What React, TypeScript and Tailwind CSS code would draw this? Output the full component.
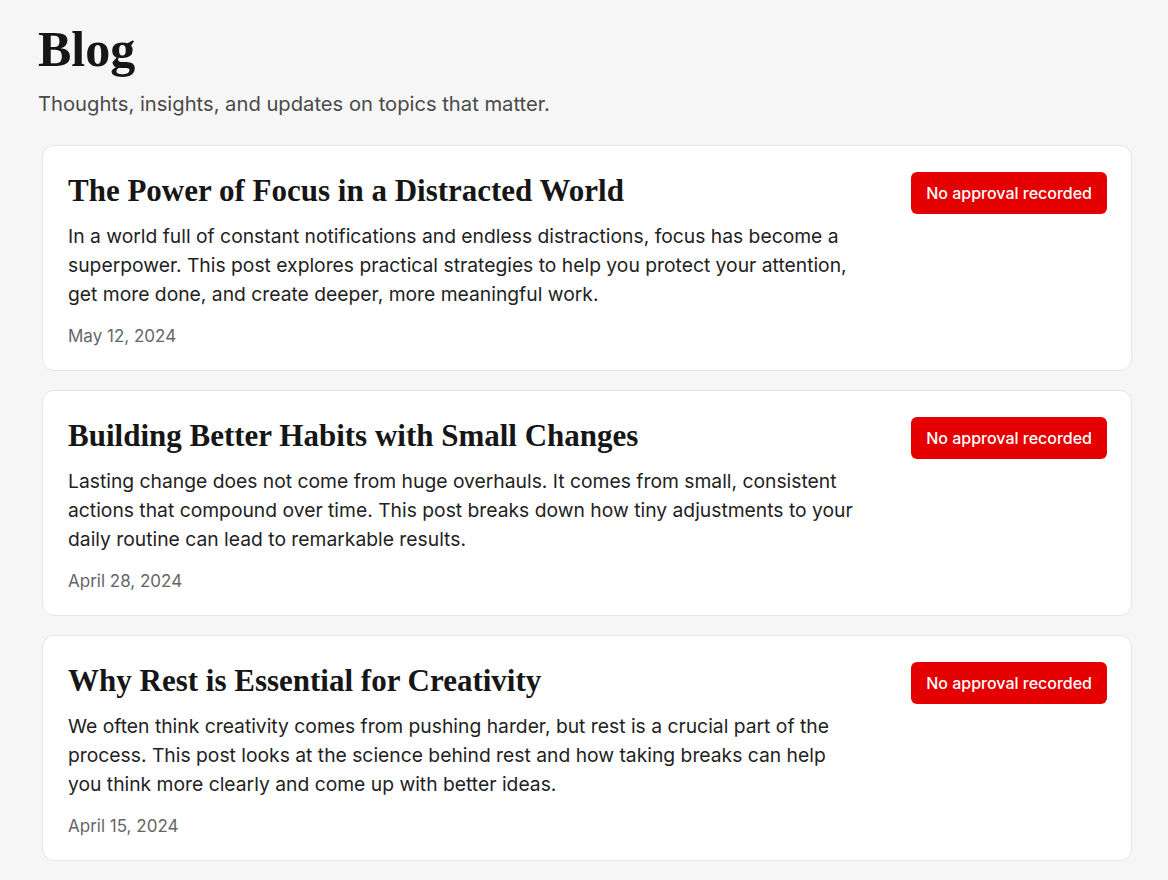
import React from 'react';

interface Post {
  title: string;
  excerpt: string;
  date: string;
}

const posts: Post[] = [
  {
    title: 'The Power of Focus in a Distracted World',
    excerpt:
      'In a world full of constant notifications and endless distractions, focus has become a superpower. This post explores practical strategies to help you protect your attention, get more done, and create deeper, more meaningful work.',
    date: 'May 12, 2024',
  },
  {
    title: 'Building Better Habits with Small Changes',
    excerpt:
      'Lasting change does not come from huge overhauls. It comes from small, consistent actions that compound over time. This post breaks down how tiny adjustments to your daily routine can lead to remarkable results.',
    date: 'April 28, 2024',
  },
  {
    title: 'Why Rest is Essential for Creativity',
    excerpt:
      'We often think creativity comes from pushing harder, but rest is a crucial part of the process. This post looks at the science behind rest and how taking breaks can help you think more clearly and come up with better ideas.',
    date: 'April 15, 2024',
  },
];

const serif = "font-['Liberation_Serif',serif]";

const PostCard: React.FC<{ post: Post }> = ({ post }) => (
  <article className="ml-1 flex items-start justify-between rounded-xl border border-[#e6e6e8] bg-white pl-[25px] pr-6 pt-[26px] pb-[22px]">
    <div className="max-w-[790px]">
      <h2 className={`${serif} text-[31px] font-bold leading-[38px] text-[#161616]`}>{post.title}</h2>
      <p className="mt-[12px] text-[19.3px] leading-[29px] text-[#222222]">{post.excerpt}</p>
      <p className="mt-[15px] text-[17px] leading-6 text-[#666666]">{post.date}</p>
    </div>
    <span className="shrink-0 rounded-md bg-[#e40000] px-[15px] py-[10px] text-[16px] font-medium leading-[22px] text-white">
      No approval recorded
    </span>
  </article>
);

export default function App() {
  return (
    <div className="min-h-screen bg-[#f6f6f7] pl-[38px] pr-[36px] pt-[20px] pb-[18px] font-['Inter',sans-serif]">
      <h1 className={`${serif} text-[50px] font-bold leading-[58px] text-[#161616]`}>Blog</h1>
      <p className="mt-[12px] text-[20.2px] leading-7 text-[#4a4a4a]">
        Thoughts, insights, and updates on topics that matter.
      </p>
      <div className="mt-[27px] flex flex-col gap-[19px]">
        {posts.map((post) => (
          <PostCard key={post.date} post={post} />
        ))}
      </div>
    </div>
  );
}
